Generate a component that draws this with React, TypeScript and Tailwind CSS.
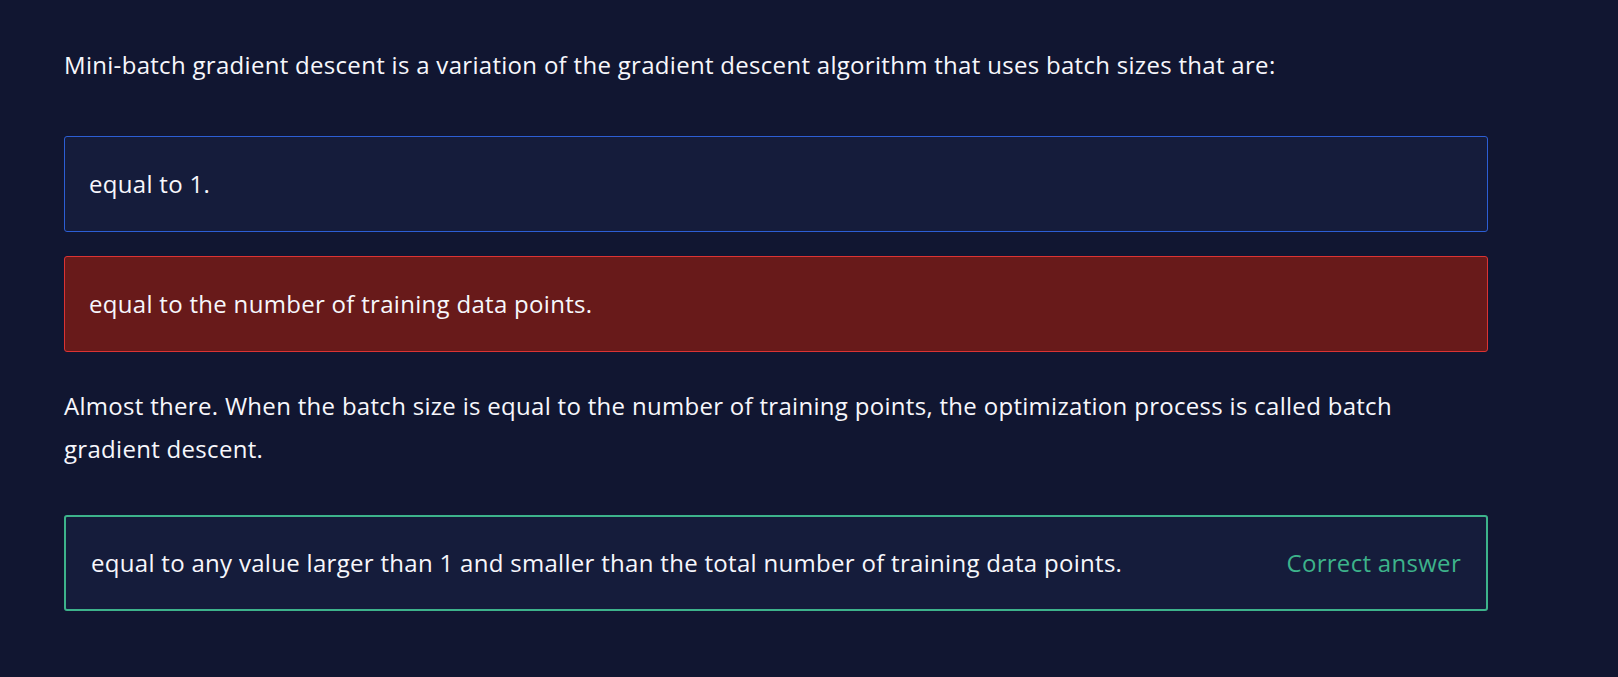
import React from 'react';

type Option = {
  text: string;
  state: 'selected' | 'wrong' | 'correct';
};

const options: Option[] = [
  { text: 'equal to 1.', state: 'selected' },
  { text: 'equal to the number of training data points.', state: 'wrong' },
];

export default function App() {
  return (
    <div
      className="min-h-screen bg-[#111631] text-[#f7f7fc] px-16 pt-[45px] pb-16 tracking-[0.3px]"
      style={{ fontFamily: '"Open Sans", "Liberation Sans", sans-serif' }}
    >
      <div className="max-w-[1424px]">
        {/* Question */}
        <p className="text-[24px] leading-[40px]">
          Mini-batch gradient descent is a variation of the gradient descent algorithm that uses batch sizes that are:
        </p>

        {/* Answered options */}
        <div className="mt-[51px] flex flex-col gap-6">
          {options.map((o) =>
            o.state === 'wrong' ? (
              <div
                key={o.text}
                className="h-24 flex items-center px-6 rounded-[3px] border border-[#dc3333] bg-[#681a1a] text-[24px]"
              >
                {o.text}
              </div>
            ) : (
              <div
                key={o.text}
                className="h-24 flex items-center px-6 rounded-[3px] border border-[#2c5ed4] bg-[#151c3b] text-[24px]"
              >
                {o.text}
              </div>
            )
          )}
        </div>

        {/* Feedback */}
        <p className="mt-8 text-[24px] leading-[43px]">
          Almost there. When the batch size is equal to the number of training points, the optimization process is called batch gradient descent.
        </p>

        {/* Correct answer */}
        <div className="mt-[45px] h-24 flex items-center justify-between pl-[25px] pr-[25px] rounded-[3px] border-2 border-[#3db38b] bg-[#151c3b] text-[24px]">
          <span>equal to any value larger than 1 and smaller than the total number of training data points.</span>
          <span className="text-[#3db38b]">Correct answer</span>
        </div>
      </div>
    </div>
  );
}
